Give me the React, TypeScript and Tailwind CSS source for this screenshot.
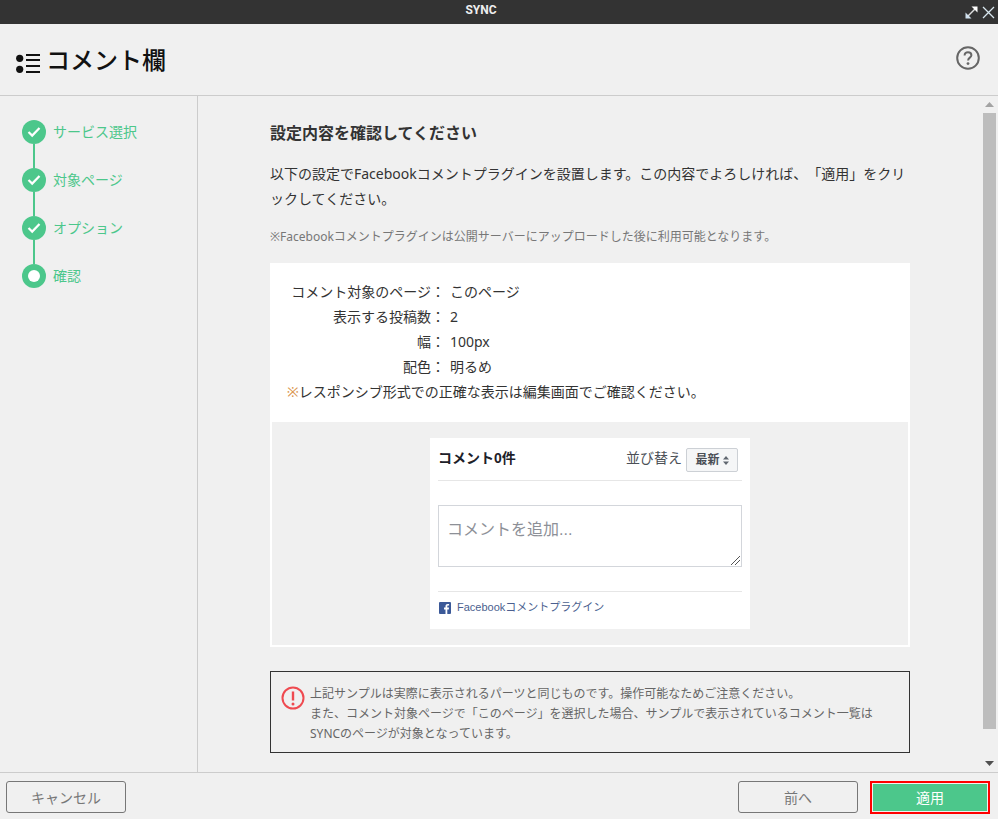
const rows = [
  ["コメント対象のページ：", "このページ"],
  ["表示する投稿数：", "2"],
  ["幅：", "100px"],
  ["配色：", "明るめ"],
]

const steps = [
  { label: "サービス選択", done: true },
  { label: "対象ページ", done: true },
  { label: "オプション", done: true },
  { label: "確認", done: false },
]

function StepDot({ done }: { done: boolean }) {
  return (
    <div className="flex h-6 w-6 items-center justify-center rounded-full bg-[#4cc78b]">
      {done ? (
        <svg width="14" height="12" viewBox="0 0 14 12" fill="none">
          <path d="M1.5 6 L5.2 9.6 L12.5 2" stroke="#fff" strokeWidth="2.2" />
        </svg>
      ) : (
        <div className="h-3 w-3 rounded-full bg-white" />
      )}
    </div>
  )
}

export default function App() {
  return (
    <div className="flex h-[819px] w-[998px] flex-col overflow-hidden bg-[#f0f0f0] text-[#333] [text-spacing-trim:space-all] [font-family:'Noto_Sans','Noto_Sans_CJK_JP',sans-serif]">
      {/* Title bar */}
      <div className="relative flex h-6 shrink-0 items-center justify-center bg-[#333] pr-[36px] pb-[5px]">
        <span className="text-[12px] font-bold text-[#eee] [font-family:'Roboto',sans-serif]">SYNC</span>
        <div className="absolute right-[3px] top-[6px] flex items-center gap-[4px]">
          <svg width="13" height="13" viewBox="0 0 13 13" fill="none">
            <path d="M2 11 L11 2" stroke="#ddd" strokeWidth="1.4" />
            <path d="M6.5 0.5 H12.5 V6.5 Z" fill="#fff" />
            <path d="M0.5 6.5 V12.5 H6.5 Z" fill="#cfe0ee" />
          </svg>
          <svg width="13" height="13" viewBox="0 0 13 13" fill="none">
            <path d="M1 1 L12 12 M12 1 L1 12" stroke="#d8e6ee" strokeWidth="1.3" />
          </svg>
        </div>
      </div>

      {/* Header */}
      <div className="flex h-[72px] shrink-0 items-center justify-between border-b border-[#ccc] pl-[16px] pr-[18px]">
        <div className="flex items-center">
          <svg width="24" height="22" viewBox="0 0 24 22" className="mt-[7px]">
            <circle cx="3.7" cy="6.3" r="3.6" fill="#111" />
            <circle cx="3.7" cy="17.3" r="3.6" fill="#111" />
            <path d="M10 3 H24 M10 8 H24 M10 14 H24 M10 20 H24" stroke="#111" strokeWidth="2" />
          </svg>
          <h1 className="pl-[6px] text-[24px] font-medium leading-none text-[#111]">コメント欄</h1>
        </div>
        <svg width="24" height="24" viewBox="0 0 24 24" fill="none" className="mb-[3px]">
          <circle cx="12" cy="12" r="10.8" stroke="#666" strokeWidth="2" />
          <path d="M8.6 9.5 C8.6 7.4 10 6.3 12 6.3 C14 6.3 15.4 7.5 15.4 9.2 C15.4 11.6 12.1 11.7 12.1 14.4" stroke="#666" strokeWidth="2" />
          <circle cx="12" cy="17.6" r="1.4" fill="#666" />
        </svg>
      </div>

      <div className="flex min-h-0 flex-1">
        {/* Step sidebar */}
        <aside className="w-[198px] shrink-0 border-r border-[#ccc] pl-[22px] pt-[24px]">
          {steps.map((s, i) => (
            <div key={s.label} className="flex h-[48px] gap-[7px]">
              <div className="flex w-6 flex-col items-center">
                <StepDot done={s.done} />
                {i < steps.length - 1 && <div className="h-6 w-[2px] bg-[#4cc78b]" />}
              </div>
              <span className="text-[14px] leading-6 text-[#4cc78b]">{s.label}</span>
            </div>
          ))}
        </aside>

        {/* Main content */}
        <main className="flex min-w-0 flex-1 overflow-hidden">
          <div className="w-[783px] shrink-0 pl-[72px] pr-[71px]">
            <h2 className="mt-[25px] text-[16px] font-bold leading-6">設定内容を確認してください</h2>
            <p className="mt-[16px] text-[14px] leading-[25px]">
              以下の設定でFacebookコメントプラグインを設置します。この内容でよろしければ、「適用」をクリックしてください。
            </p>
            <p className="mt-[16px] text-[12px] leading-5 text-[#777]">
              ※Facebookコメントプラグインは公開サーバーにアップロードした後に利用可能となります。
            </p>

            {/* Summary box */}
            <div className="mt-[16px] bg-white p-[2px]">
              <div className="px-[15px] pt-[14px]">
                {rows.map(([k, v]) => (
                  <div key={k} className="flex text-[14px] leading-[25px]">
                    <span className="w-[158px] text-right">{k}</span>
                    <span className="pl-[5px]">{v}</span>
                  </div>
                ))}
                <p className="text-[14px] leading-[25px]">
                  <span className="text-[#d9924a]">※</span>レスポンシブ形式での正確な表示は編集画面でご確認ください。
                </p>
              </div>

              <div className="mt-[18px] flex justify-center bg-[#f0f0f0] pb-[16px] pt-[16px]">
                <div className="h-[191px] w-[320px] bg-white px-[8px] pt-[8px] [font-family:'Liberation_Sans','Noto_Sans_CJK_JP',sans-serif]">
                  <div className="flex h-[35px] items-start justify-between border-b border-[#e6e6e6]">
                    <span className="text-[14px] font-bold leading-[24px] text-[#1d2129]">コメント0件</span>
                    <div className="flex items-start gap-[4px] pr-[4px]">
                      <span className="text-[14px] leading-[24px] text-[#4b4f56]">並び替え</span>
                      <div className="mt-[2px] flex h-[24px] w-[52px] items-center justify-center gap-[3px] rounded-[2px] border border-[#ccd0d5] bg-[#f5f6f7] text-[12px] font-bold text-[#4b4f56]">
                        最新
                        <svg width="6" height="9" viewBox="0 0 6 9">
                          <path d="M3 0 L6 3.5 H0 Z M3 9 L0 5.5 H6 Z" fill="#606770" />
                        </svg>
                      </div>
                    </div>
                  </div>
                  <div className="relative mt-[24px] h-[62px] border border-[#d3d6db] px-[8px] pt-[12px] text-[16px] leading-[24px] text-[#8d9097]">
                    コメントを追加...
                    <svg width="9" height="9" viewBox="0 0 9 9" className="absolute bottom-[1px] right-[1px]">
                      <path d="M0 9 L9 0 M4 9 L9 4" stroke="#555" strokeWidth="1" />
                    </svg>
                  </div>
                  <div className="mt-[24px] flex h-[32px] items-center gap-[6px] border-t border-[#e6e6e6] pl-[1px]">
                    <svg width="12" height="12" viewBox="0 0 12 12">
                      <rect width="12" height="12" rx="1" fill="#3b5998" />
                      <path d="M8.3 12 V7.4 H9.8 L10 5.6 H8.3 V4.5 C8.3 4 8.5 3.6 9.2 3.6 H10.1 V2 C9.9 2 9.4 1.9 8.8 1.9 C7.4 1.9 6.5 2.7 6.5 4.3 V5.6 H5 V7.4 H6.5 V12 Z" fill="#fff" />
                    </svg>
                    <span className="text-[11px] text-[#4b5f8f]">Facebookコメントプラグイン</span>
                  </div>
                </div>
              </div>
            </div>

            {/* Notice */}
            <div className="mt-[24px] flex h-[82px] gap-[5px] border border-[#333] pl-[10px] pt-[12px] text-[12px] leading-[20px] text-[#666]">
              <svg width="24" height="24" viewBox="0 0 24 24" fill="none" className="mt-[2px] shrink-0">
                <circle cx="12" cy="12" r="10.5" stroke="#ef4a50" strokeWidth="2" />
                <path d="M12 5.5 V14.5" stroke="#ef4a50" strokeWidth="2.4" />
                <circle cx="12" cy="18" r="1.5" fill="#ef4a50" />
              </svg>
              <p className="w-[580px]">
                上記サンプルは実際に表示されるパーツと同じものです。操作可能なためご注意ください。
                <br />
                また、コメント対象ページで「このページ」を選択した場合、サンプルで表示されているコメント一覧は
                <br />
                SYNCのページが対象となっています。
              </p>
            </div>
          </div>

          {/* Scrollbar */}
          <div className="flex w-[17px] shrink-0 flex-col items-center">
            <div className="flex h-[17px] items-center justify-center">
              <svg width="9" height="5" viewBox="0 0 9 5"><path d="M4.5 0 L9 5 H0 Z" fill="#a3a3a3" /></svg>
            </div>
            <div className="h-[616px] w-[13px] bg-[#bdbdbd]" />
            <div className="flex-1" />
            <div className="flex h-[17px] items-center justify-center">
              <svg width="9" height="5" viewBox="0 0 9 5"><path d="M4.5 5 L9 0 H0 Z" fill="#505050" /></svg>
            </div>
          </div>
        </main>
      </div>

      {/* Footer */}
      <footer className="flex h-[47px] shrink-0 items-center justify-between border-t border-[#ccc] pl-[6px] pr-[8px] pt-[2px]">
        <button className="h-[32px] w-[120px] rounded-[3px] border border-[#777] text-[14px] text-[#777]">キャンセル</button>
        <div className="flex items-center gap-[12px]">
          <button className="h-[32px] w-[120px] rounded-[3px] border border-[#777] text-[14px] text-[#777]">前へ</button>
          <div className="border-2 border-[#f00] p-[1px]">
            <button className="block h-[27px] w-[114px] bg-[#4cc78b] text-[14px] text-white">適用</button>
          </div>
        </div>
      </footer>
    </div>
  )
}
